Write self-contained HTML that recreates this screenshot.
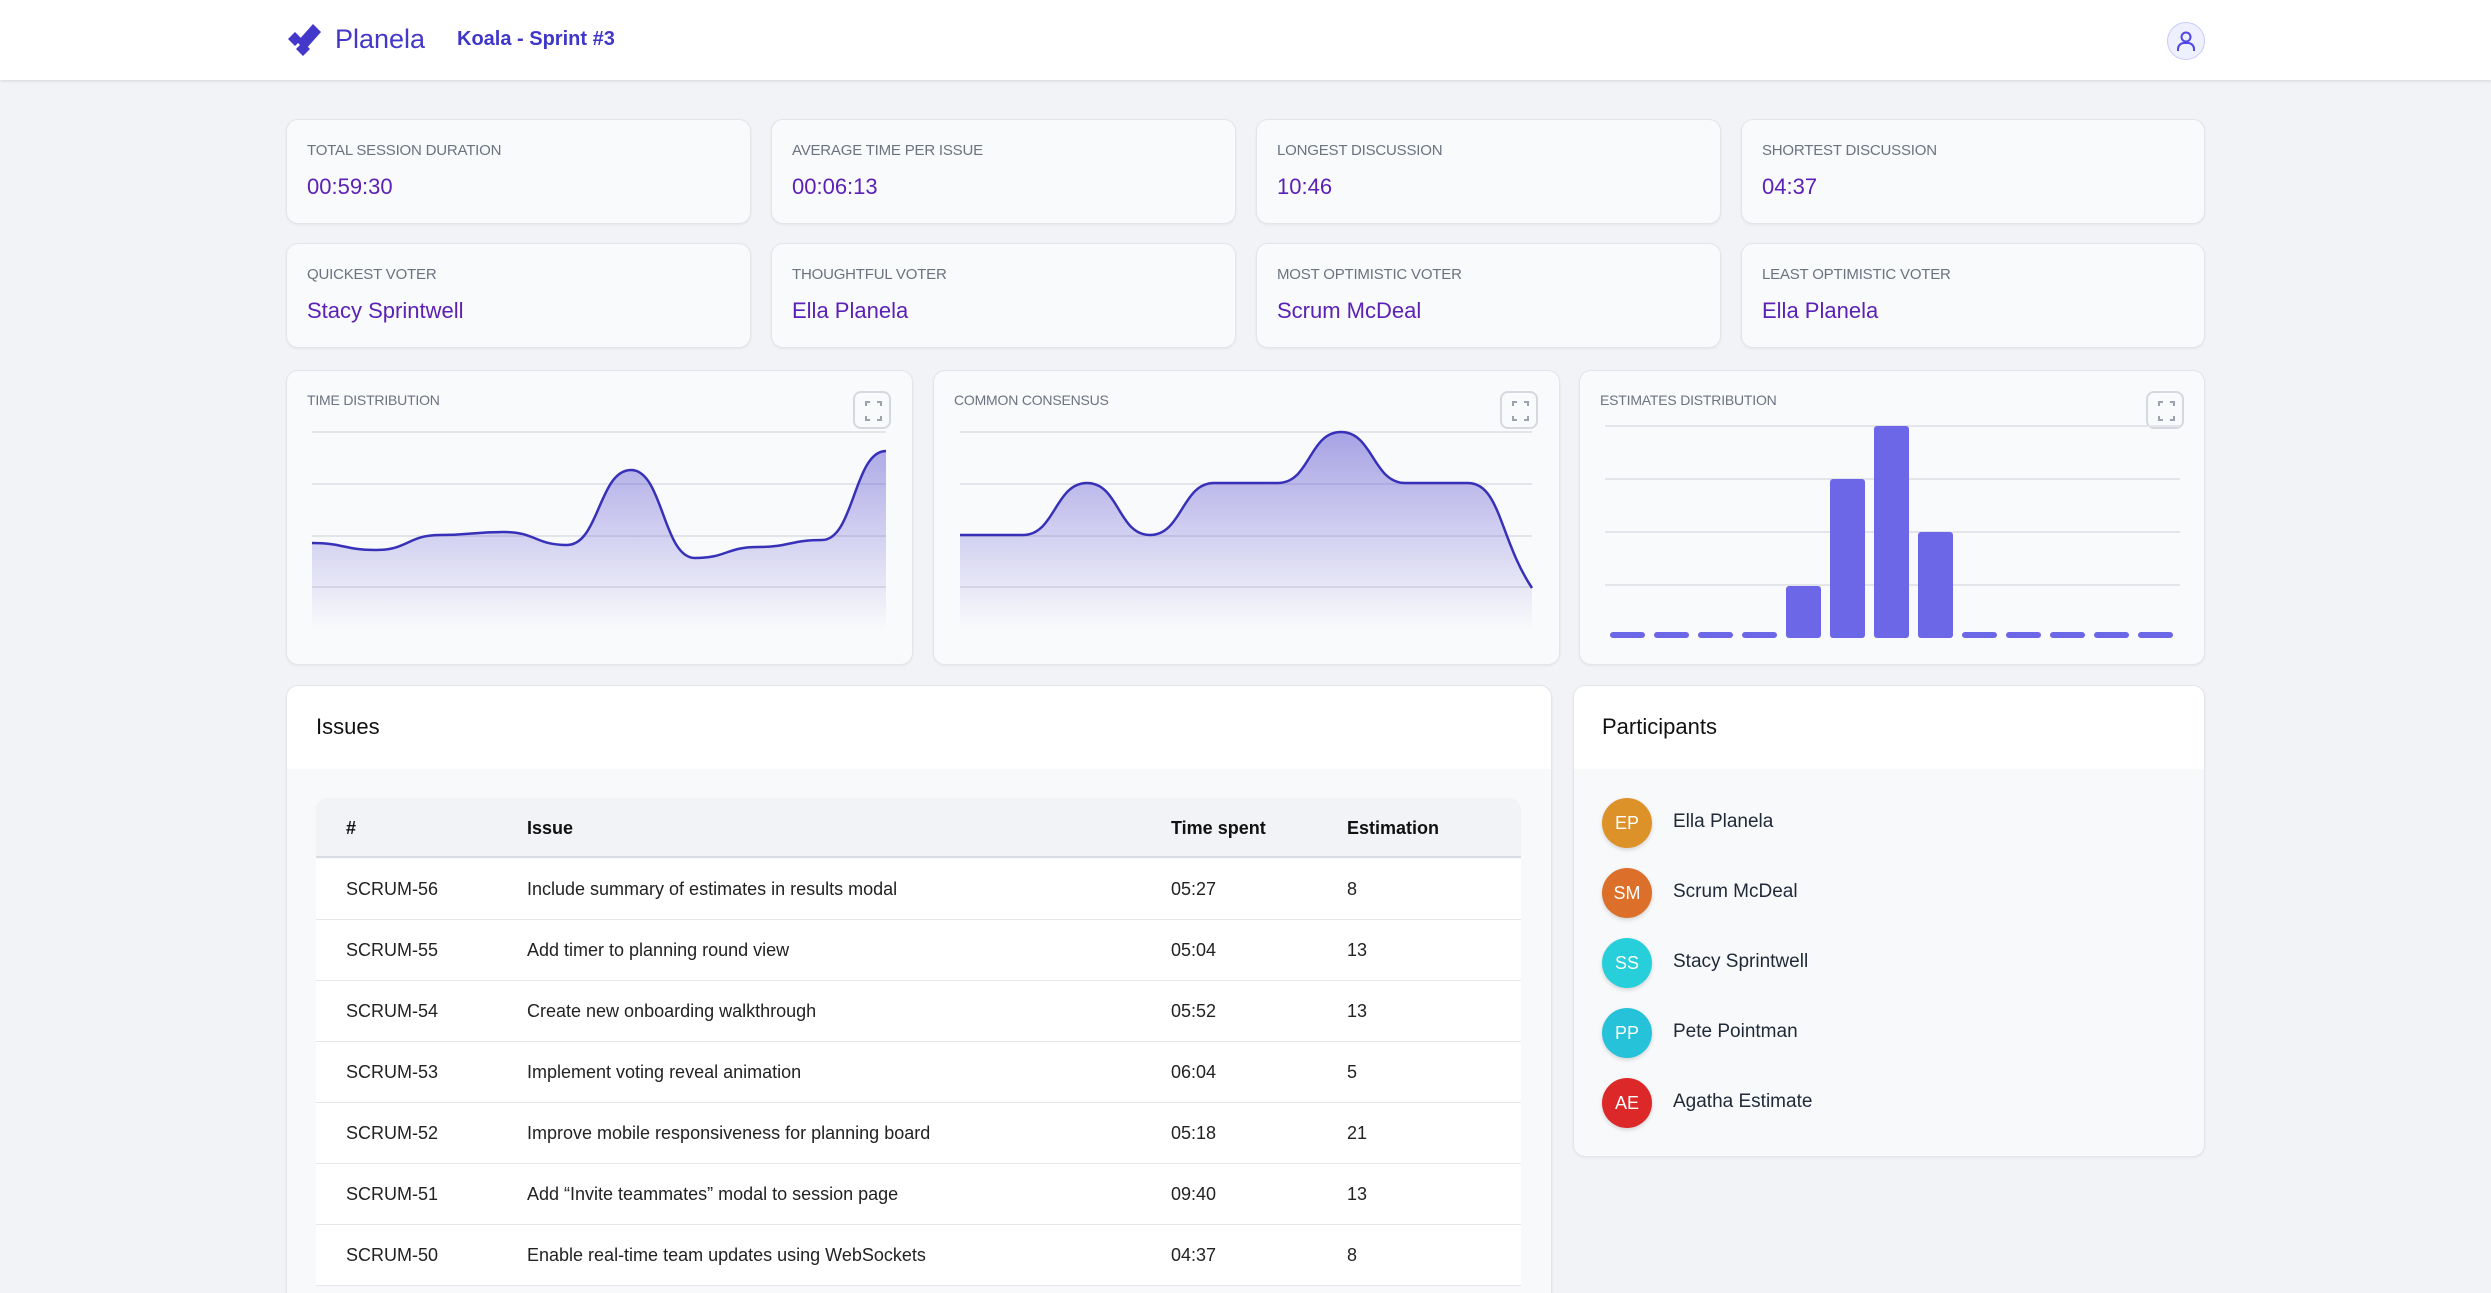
<!DOCTYPE html>
<html style="width:2491px;height:1293px;overflow:hidden"><head><meta charset="utf-8"><style>
*{box-sizing:border-box;margin:0;padding:0}
body{width:2491px;height:1293px;overflow:hidden;background:#f1f3f7;font-family:"Liberation Sans",sans-serif;position:relative;color:#1f2937}
.abs{position:absolute}
.hdr{left:0;top:0;width:2491px;height:80px;background:#fff;box-shadow:0 1px 3px rgba(0,0,0,.12)}
.card{position:absolute;background:#f9fafb;border:1px solid #e2e5ea;border-radius:12px;box-shadow:0 1px 2px rgba(0,0,0,.06)}
.lbl{position:absolute;left:20px;top:22px;font-size:15px;color:#6b7280;letter-spacing:-.2px}
.val{position:absolute;left:20px;top:54px;font-size:22px;color:#5b21b6}
.btn{position:absolute;width:38px;height:38px;border:2px solid #d5d8de;border-radius:8px;background:#f9fafb}
.th{position:absolute;font-size:18px;font-weight:bold;color:#111}
.row{position:absolute;left:316px;width:1205px;height:61px;background:#fff;border-bottom:1px solid #e5e7eb;font-size:18px;color:#222}
.row span{position:absolute;top:20px}
.av{position:absolute;left:1602px;width:50px;height:50px;border-radius:50%;color:#fff;font-size:18px;text-align:center;line-height:50px;box-shadow:0 2px 4px rgba(0,0,0,.15)}
.nm{position:absolute;left:1673px;font-size:19px;color:#1f2937}
</style></head><body>
<div class="abs hdr"></div>
<svg class="abs" style="left:0;top:0" width="400" height="80"><g fill="#4338ca"><polygon points="295,32 302,39 295,46 288,39"/><polygon points="303,42 310,49 303,56 296,49"/><polygon points="297,42 313,24 321,32 305,50"/></g></svg>
<div class="abs" style="left:335px;top:24px;font-size:27px;color:#4338ca">Planela</div>
<div class="abs" style="left:457px;top:28px;font-size:20px;font-weight:bold;color:#3f37c9">Koala - Sprint #3</div>
<div class="abs" style="left:2167px;top:22px;width:38px;height:38px;border-radius:50%;background:#eef0fe;border:1px solid #c7cbfa"></div>
<svg class="abs" style="left:2174px;top:29px" width="24" height="24" viewBox="0 0 24 24" fill="none" stroke="#4f46e5" stroke-width="2"><circle cx="12" cy="8" r="4.5"/><path d="M4 22v-2a6 6 0 0 1 6-6h4a6 6 0 0 1 6 6v2"/></svg>

<div class="card" style="left:286px;top:119px;width:465px;height:105px"><div class="lbl">TOTAL SESSION DURATION</div><div class="val">00:59:30</div></div>
<div class="card" style="left:771px;top:119px;width:465px;height:105px"><div class="lbl">AVERAGE TIME PER ISSUE</div><div class="val">00:06:13</div></div>
<div class="card" style="left:1256px;top:119px;width:465px;height:105px"><div class="lbl">LONGEST DISCUSSION</div><div class="val">10:46</div></div>
<div class="card" style="left:1741px;top:119px;width:464px;height:105px"><div class="lbl">SHORTEST DISCUSSION</div><div class="val">04:37</div></div>
<div class="card" style="left:286px;top:243px;width:465px;height:105px"><div class="lbl">QUICKEST VOTER</div><div class="val">Stacy Sprintwell</div></div>
<div class="card" style="left:771px;top:243px;width:465px;height:105px"><div class="lbl">THOUGHTFUL VOTER</div><div class="val">Ella Planela</div></div>
<div class="card" style="left:1256px;top:243px;width:465px;height:105px"><div class="lbl">MOST OPTIMISTIC VOTER</div><div class="val">Scrum McDeal</div></div>
<div class="card" style="left:1741px;top:243px;width:464px;height:105px"><div class="lbl">LEAST OPTIMISTIC VOTER</div><div class="val">Ella Planela</div></div>

<div class="card" style="left:286px;top:370px;width:627px;height:295px"><div class="lbl" style="top:21px;font-size:14px">TIME DISTRIBUTION</div></div>
<div class="card" style="left:933px;top:370px;width:627px;height:295px"><div class="lbl" style="top:21px;font-size:14px">COMMON CONSENSUS</div></div>
<div class="card" style="left:1579px;top:370px;width:626px;height:295px"><div class="lbl" style="top:21px;font-size:14px">ESTIMATES DISTRIBUTION</div></div>
<div class="btn" style="left:853px;top:391px"></div>
<div class="btn" style="left:1500px;top:391px"></div>
<div class="btn" style="left:2146px;top:391px"></div>

<svg class="abs" style="left:0;top:0" width="2491" height="700">
<defs><linearGradient id="g2" x1="0" y1="432" x2="0" y2="630" gradientUnits="userSpaceOnUse"><stop offset="0" stop-color="#4338ca" stop-opacity=".45"/><stop offset="1" stop-color="#4338ca" stop-opacity="0"/></linearGradient></defs>
<g stroke="#e3e5ea" stroke-width="2"><path d="M312 432H886M312 484H886M312 536H886M312 587H886M960 432H1532M960 484H1532M960 536H1532M960 587H1532M1605 426H2180M1605 479H2180M1605 532H2180M1605 585H2180"/></g>
<g fill="none" stroke="#9ca3af" stroke-width="2"><path d="M866 406v-4h4M877 402h4v4M866 416v4h4M877 420h4v-4"/><path d="M1513 406v-4h4M1524 402h4v4M1513 416v4h4M1524 420h4v-4"/><path d="M2159 406v-4h4M2170 402h4v4M2159 416v4h4M2170 420h4v-4"/></g>
<path fill="url(#g2)" d="M312,543 C344,543 344,550 376,550 C408,550 408,535 440,535 C472,535 472,532 504,532 C536,532 535,545 567,545 C599,545 599,470 631,470 C663,470 663,558 695,558 C727,558 726,547 758,547 C790,547 790,540 822,540 C854,540 854,451 886,451 L886,632 L312,632Z"/>
<path fill="none" stroke="#3730b8" stroke-width="2.5" d="M312,543 C344,543 344,550 376,550 C408,550 408,535 440,535 C472,535 472,532 504,532 C536,532 535,545 567,545 C599,545 599,470 631,470 C663,470 663,558 695,558 C727,558 726,547 758,547 C790,547 790,540 822,540 C854,540 854,451 886,451"/>
<path fill="url(#g2)" d="M960,535 C992,535 991,535 1023,535 C1055,535 1055,483 1087,483 C1119,483 1118,535 1150,535 C1182,535 1182,483 1214,483 C1246,483 1246,483 1278,483 C1310,483 1309,432 1341,432 C1373,432 1373,483 1405,483 C1437,483 1436,483 1468,483 C1500,483 1500,540 1532,588 L1532,632 L960,632Z"/>
<path fill="none" stroke="#3730b8" stroke-width="2.5" d="M960,535 C992,535 991,535 1023,535 C1055,535 1055,483 1087,483 C1119,483 1118,535 1150,535 C1182,535 1182,483 1214,483 C1246,483 1246,483 1278,483 C1310,483 1309,432 1341,432 C1373,432 1373,483 1405,483 C1437,483 1436,483 1468,483 C1500,483 1500,540 1532,588"/>
<g fill="#6c67e6">
<rect x="1610" y="632" width="35" height="6" rx="3"/><rect x="1654" y="632" width="35" height="6" rx="3"/><rect x="1698" y="632" width="35" height="6" rx="3"/><rect x="1742" y="632" width="35" height="6" rx="3"/>
<rect x="1786" y="586" width="35" height="52" rx="3"/><rect x="1830" y="479" width="35" height="159" rx="3"/><rect x="1874" y="426" width="35" height="212" rx="3"/><rect x="1918" y="532" width="35" height="106" rx="3"/>
<rect x="1962" y="632" width="35" height="6" rx="3"/><rect x="2006" y="632" width="35" height="6" rx="3"/><rect x="2050" y="632" width="35" height="6" rx="3"/><rect x="2094" y="632" width="35" height="6" rx="3"/><rect x="2138" y="632" width="35" height="6" rx="3"/>
</g>
</svg>

<div class="card" style="left:286px;top:685px;width:1266px;height:608px;background:#f8f9fb;overflow:hidden;border-bottom:none;border-radius:12px 12px 0 0">
<div style="height:83px;background:#fff"></div></div>
<div class="abs" style="left:316px;top:714px;font-size:22px;color:#111">Issues</div>
<div class="abs" style="left:316px;top:798px;width:1205px;height:60px;background:#f1f3f7;border-radius:12px 12px 0 0;border-bottom:2px solid #d9dce3"></div>
<div class="th" style="left:346px;top:818px">#</div>
<div class="th" style="left:527px;top:818px">Issue</div>
<div class="th" style="left:1171px;top:818px">Time spent</div>
<div class="th" style="left:1347px;top:818px">Estimation</div>
<div class="row" style="top:859px"><span style="left:30px">SCRUM-56</span><span style="left:211px">Include summary of estimates in results modal</span><span style="left:855px">05:27</span><span style="left:1031px">8</span></div>
<div class="row" style="top:920px"><span style="left:30px">SCRUM-55</span><span style="left:211px">Add timer to planning round view</span><span style="left:855px">05:04</span><span style="left:1031px">13</span></div>
<div class="row" style="top:981px"><span style="left:30px">SCRUM-54</span><span style="left:211px">Create new onboarding walkthrough</span><span style="left:855px">05:52</span><span style="left:1031px">13</span></div>
<div class="row" style="top:1042px"><span style="left:30px">SCRUM-53</span><span style="left:211px">Implement voting reveal animation</span><span style="left:855px">06:04</span><span style="left:1031px">5</span></div>
<div class="row" style="top:1103px"><span style="left:30px">SCRUM-52</span><span style="left:211px">Improve mobile responsiveness for planning board</span><span style="left:855px">05:18</span><span style="left:1031px">21</span></div>
<div class="row" style="top:1164px"><span style="left:30px">SCRUM-51</span><span style="left:211px">Add “Invite teammates” modal to session page</span><span style="left:855px">09:40</span><span style="left:1031px">13</span></div>
<div class="row" style="top:1225px;height:61px"><span style="left:30px">SCRUM-50</span><span style="left:211px">Enable real-time team updates using WebSockets</span><span style="left:855px">04:37</span><span style="left:1031px">8</span></div>

<div class="card" style="left:1573px;top:685px;width:632px;height:472px;background:#f8f9fb;overflow:hidden"><div style="height:83px;background:#fff"></div></div>
<div class="abs" style="left:1602px;top:714px;font-size:22px;color:#111">Participants</div>
<div class="av" style="top:798px;background:#dd9229">EP</div><div class="nm" style="top:811px">Ella Planela</div>
<div class="av" style="top:868px;background:#dc6f29">SM</div><div class="nm" style="top:881px">Scrum McDeal</div>
<div class="av" style="top:938px;background:#26cfd9">SS</div><div class="nm" style="top:951px">Stacy Sprintwell</div>
<div class="av" style="top:1008px;background:#25c2d9">PP</div><div class="nm" style="top:1021px">Pete Pointman</div>
<div class="av" style="top:1078px;background:#dc2828">AE</div><div class="nm" style="top:1091px">Agatha Estimate</div>
</body></html>
